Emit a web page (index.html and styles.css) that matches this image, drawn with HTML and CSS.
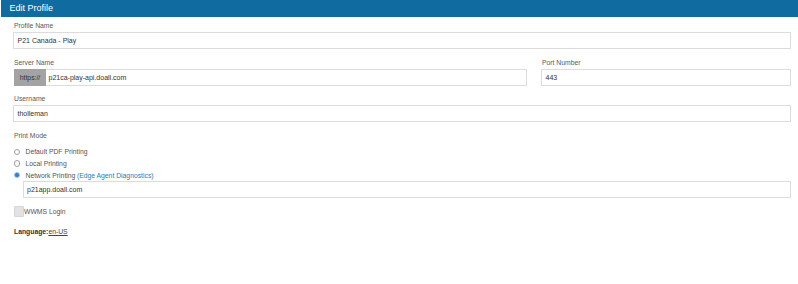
FILE: index.html
```html
<!DOCTYPE html>
<html>
<head>
<meta charset="utf-8">
<link rel="stylesheet" href="styles.css">
</head>
<body>
<div class="header">Edit Profile</div>
<div class="form">
  <div class="group">
    <div class="label">Profile Name</div>
    <div class="input">P21 Canada - Play</div>
  </div>
  <div class="row">
    <div class="group">
      <div class="label">Server Name</div>
      <div class="input-group">
        <span class="addon">https://</span>
        <div class="input grow">p21ca-play-api.doall.com</div>
      </div>
    </div>
    <div class="group">
      <div class="label">Port Number</div>
      <div class="input">443</div>
    </div>
  </div>
  <div class="group">
    <div class="label">Username</div>
    <div class="input">tholleman</div>
  </div>
  <div class="group">
    <div class="label">Print Mode</div>
    <div class="radios">
      <div class="radio"><span class="dot"></span>Default PDF Printing</div>
      <div class="radio"><span class="dot"></span>Local Printing</div>
      <div class="radio"><span class="dot checked"></span>Network Printing <span class="link">(Edge Agent Diagnostics)</span></div>
    </div>
    <div class="input indent">p21app.doall.com</div>
  </div>
  <div class="check"><span class="box"></span>WWMS Login</div>
  <div class="lang"><b>Language:</b><u>en-US</u></div>
</div>
</body>
</html>
```
FILE: styles.css
```css
html, body {
  margin: 0;
  padding: 0;
  background: #fff;
  font-family: "Liberation Sans", Arial, sans-serif;
}
.header {
  height: 17px;
  margin-left: 1px;
  background: #106ba0;
  color: #fff;
  font-size: 9px;
  line-height: 17px;
  padding-left: 8.5px;
  box-sizing: border-box;
}
.form {
  padding: 0 7px 0 13px;
}
.group {
  margin-top: 8.5px;
}
.form > .group:first-child {
  margin-top: 4px;
}
.row {
  display: grid;
  grid-template-columns: 514px 250px;
  column-gap: 14px;
}
.label {
  font-size: 6.8px;
  line-height: 9px;
  color: #5a5a5a;
  padding-left: 1px;
  margin-bottom: 2px;
}
.input {
  height: 17px;
  box-sizing: border-box;
  border: 1px solid #dcdcdc;
  background: #fff;
  font-size: 7px;
  line-height: 15px;
  color: #333;
  padding-left: 3.5px;
}
.input-group {
  display: flex;
  height: 17px;
}
.addon {
  width: 32px;
  flex: none;
  background: #a3a3a3;
  color: #333;
  font-size: 6.8px;
  line-height: 17px;
  text-align: center;
  margin-left: 1px;
}
.grow {
  flex: 1;
  padding-left: 2.5px;
  border-left: none;
}
.radios {
  margin-top: 6.5px;
}
.radio {
  display: flex;
  align-items: center;
  height: 11.7px;
  font-size: 6.8px;
  color: #555;
}
.dot {
  width: 4.5px;
  height: 4.5px;
  border: 0.8px solid #a0a0a0;
  border-radius: 50%;
  margin-left: 0.5px;
  margin-right: 5.5px;
  box-sizing: content-box;
  background: #fff;
}
.dot.checked {
  background: #2f7fd0;
  border-color: #9cc0e8;
}
.link {
  color: #2b7ab9;
  margin-left: 1.5px;
}
.indent {
  margin-left: 9.5px;
}
.check {
  display: flex;
  align-items: center;
  margin-top: 7px;
  height: 12px;
  font-size: 6.8px;
  color: #555;
}
.box {
  width: 10px;
  height: 11px;
  box-sizing: border-box;
  background: #e3e3e3;
  border: 1px solid #d6d6d6;
  border-radius: 1px;
  margin-left: 1px;
}
.lang {
  margin-top: 9.5px;
  line-height: 9px;
  font-size: 6.8px;
  color: #333;
  padding-left: 1px;
}
.lang b {
  font-weight: bold;
}
.lang u {
  color: #444;
}
```
